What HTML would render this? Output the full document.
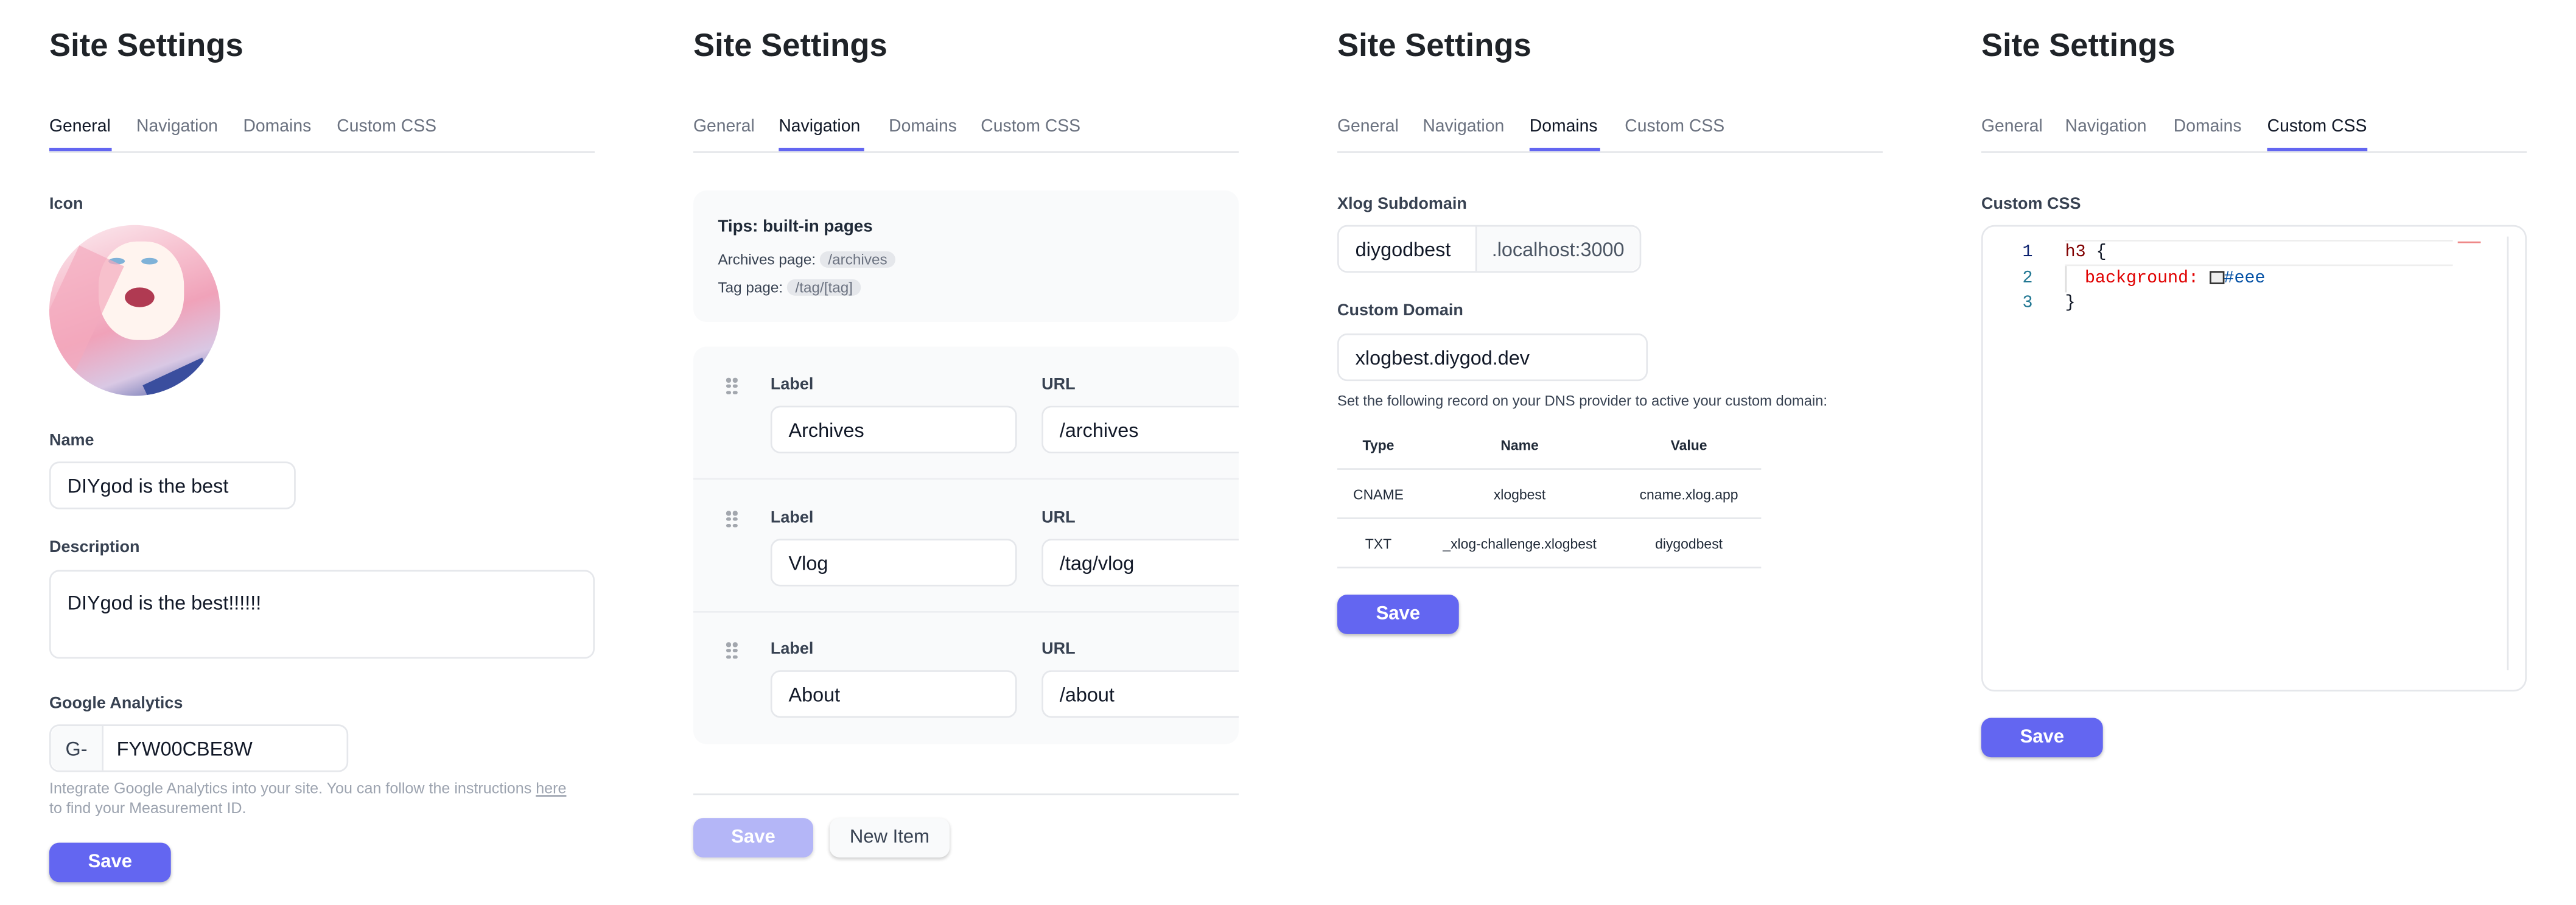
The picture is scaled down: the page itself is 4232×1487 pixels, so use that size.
<!DOCTYPE html>
<html><head><meta charset="utf-8"><style>
*{box-sizing:border-box;margin:0;padding:0}
html,body{width:4232px;height:1486px;overflow:hidden;background:#fff}
#s{position:absolute;left:0;top:0;width:1568px;height:551px;transform:scale(2.699);transform-origin:0 0;font-family:"Liberation Sans",sans-serif;color:#111827}
.a{position:absolute;white-space:nowrap}
.h{font-size:19.5px;font-weight:bold;color:#1f2328;line-height:1}
.tab{font-size:10.5px;color:#6b7280;line-height:1}
.tab.on{color:#111827;font-weight:500}
.ul{position:absolute;height:2px;background:#6366f1}
.bl{position:absolute;height:1px;background:#e5e7eb}
.lb{font-size:10px;font-weight:bold;color:#374151;line-height:1}
.in{position:absolute;border:1px solid #e5e7eb;border-radius:6px;background:#fff;font-size:12px;color:#111827;padding-left:10px;display:flex;align-items:center}
.btn{position:absolute;border-radius:6px;background:#6366f1;color:#fff;font-size:11.5px;font-weight:bold;display:flex;align-items:center;justify-content:center;box-shadow:0 1px 2px rgba(0,0,0,.25)}
.sm{font-size:9.3px;color:#9ca3af;line-height:12px}
.dots{position:absolute;width:7px;height:10px}
.dots i{position:absolute;width:2.6px;height:2.6px;border-radius:50%;background:#a3a7ae}
.mono{font-family:"Liberation Mono",monospace;font-size:10.5px;line-height:1}
</style></head><body><div id="s">

<!-- Panel 1 -->
<div class="a h" style="left:30px;top:18.5px">Site Settings</div>
<div class="a tab on" style="left:30px;top:72px">General</div>
<div class="a tab" style="left:83px;top:72px">Navigation</div>
<div class="a tab" style="left:148px;top:72px">Domains</div>
<div class="a tab" style="left:205px;top:72px">Custom CSS</div>
<div class="bl" style="left:30px;top:91.5px;width:332px"></div>
<div class="ul" style="left:30px;top:90px;width:38px"></div>
<div class="a lb" style="left:30px;top:120px">Icon</div>
<div class="a" style="left:30px;top:137px;width:104px;height:104px;border-radius:50%;overflow:hidden;background:linear-gradient(160deg,#fbeef2 0%,#f7c3d1 30%,#f0a2b9 55%,#d9c8e4 78%,#3a4f9c 100%)">
<div style="position:absolute;left:30px;top:10px;width:52px;height:60px;border-radius:45%;background:#fff4ef"></div>
<div style="position:absolute;left:46px;top:38px;width:18px;height:12px;border-radius:50%;background:#b03a52"></div>
<div style="position:absolute;left:36px;top:20px;width:10px;height:4px;border-radius:50%;background:#7fb2d8"></div>
<div style="position:absolute;left:56px;top:20px;width:10px;height:4px;border-radius:50%;background:#7fb2d8"></div>
<div style="position:absolute;left:60px;top:88px;width:40px;height:24px;background:#3a4e9e;transform:rotate(-25deg)"></div>
<div style="position:absolute;left:0;top:15px;width:30px;height:80px;background:#f4a9bd;transform:rotate(25deg);opacity:.7"></div>
</div>
<div class="a lb" style="left:30px;top:264px">Name</div>
<div class="in" style="left:30px;top:281px;width:150px;height:29px">DIYgod is the best</div>
<div class="a lb" style="left:30px;top:329px">Description</div>
<div class="in" style="left:30px;top:347px;width:332px;height:54px;align-items:flex-start;padding-top:12px">DIYgod is the best!!!!!!</div>
<div class="a lb" style="left:30px;top:424px">Google Analytics</div>
<div class="in" style="left:30px;top:441px;width:182px;height:29px;padding-left:0">
<div style="width:32px;height:100%;background:#f9fafb;border-right:1px solid #e5e7eb;color:#374151;display:flex;align-items:center;justify-content:center;border-radius:6px 0 0 6px">G-</div>
<div style="padding-left:8px">FYW00CBE8W</div></div>
<div class="a sm" style="left:30px;top:474px">Integrate Google Analytics into your site. You can follow the instructions <u>here</u><br>to find your Measurement ID.</div>
<div class="btn" style="left:30px;top:513px;width:74px;height:24px">Save</div>

<!-- Panel 2 -->
<div class="a h" style="left:422px;top:18.5px">Site Settings</div>
<div class="a tab" style="left:422px;top:72px">General</div>
<div class="a tab on" style="left:474px;top:72px">Navigation</div>
<div class="a tab" style="left:541px;top:72px">Domains</div>
<div class="a tab" style="left:597px;top:72px">Custom CSS</div>
<div class="bl" style="left:422px;top:91.5px;width:332px"></div>
<div class="ul" style="left:474px;top:90px;width:52px"></div>
<div class="a" style="left:422px;top:116px;width:332px;height:80px;background:#f9fafb;border-radius:8px"></div>
<div class="a" style="left:437px;top:133px;font-size:10.3px;font-weight:bold;color:#1f2937">Tips: built-in pages</div>
<div class="a" style="left:437px;top:153px;font-size:9px;color:#374151">Archives page: <span style="background:#e5e7eb;color:#6b7280;border-radius:6px;padding:0 5px">/archives</span></div>
<div class="a" style="left:437px;top:170px;font-size:9px;color:#374151">Tag page: <span style="background:#e5e7eb;color:#6b7280;border-radius:6px;padding:0 5px">/tag/[tag]</span></div>
<div class="a" style="left:422px;top:211px;width:332px;height:242px;background:#f9fafb;border-radius:8px;overflow:hidden">
<div class="bl" style="left:0;top:80px;width:332px;background:#eceef1"></div>
<div class="bl" style="left:0;top:161px;width:332px;background:#eceef1"></div>
</div>
<div class="dots" style="left:442px;top:230px"><i style="left:0;top:0"></i><i style="left:4.2px;top:0"></i><i style="left:0;top:3.8px"></i><i style="left:4.2px;top:3.8px"></i><i style="left:0;top:7.6px"></i><i style="left:4.2px;top:7.6px"></i></div>
<div class="a lb" style="left:469px;top:230px">Label</div><div class="a lb" style="left:634px;top:230px">URL</div>
<div class="in" style="left:469px;top:247px;width:150px;height:29px">Archives</div>
<div class="in" style="left:634px;top:247px;width:130px;height:29px;border-right:none;border-radius:6px 0 0 6px">/archives</div>
<div class="dots" style="left:442px;top:311px"><i style="left:0;top:0"></i><i style="left:4.2px;top:0"></i><i style="left:0;top:3.8px"></i><i style="left:4.2px;top:3.8px"></i><i style="left:0;top:7.6px"></i><i style="left:4.2px;top:7.6px"></i></div>
<div class="a lb" style="left:469px;top:311px">Label</div><div class="a lb" style="left:634px;top:311px">URL</div>
<div class="in" style="left:469px;top:328px;width:150px;height:29px">Vlog</div>
<div class="in" style="left:634px;top:328px;width:130px;height:29px;border-right:none;border-radius:6px 0 0 6px">/tag/vlog</div>
<div class="dots" style="left:442px;top:391px"><i style="left:0;top:0"></i><i style="left:4.2px;top:0"></i><i style="left:0;top:3.8px"></i><i style="left:4.2px;top:3.8px"></i><i style="left:0;top:7.6px"></i><i style="left:4.2px;top:7.6px"></i></div>
<div class="a lb" style="left:469px;top:391px">Label</div><div class="a lb" style="left:634px;top:391px">URL</div>
<div class="in" style="left:469px;top:408px;width:150px;height:29px">About</div>
<div class="in" style="left:634px;top:408px;width:130px;height:29px;border-right:none;border-radius:6px 0 0 6px">/about</div>
<div class="a" style="left:754px;top:200px;width:60px;height:300px;background:#fff"></div>
<div class="bl" style="left:422px;top:483px;width:332px"></div>
<div class="btn" style="left:422px;top:498px;width:73px;height:24px;background:#b4b6f7;box-shadow:0 1px 2px rgba(0,0,0,.15)">Save</div>
<div class="btn" style="left:505px;top:498px;width:73px;height:24px;background:#f9fafb;color:#374151;font-weight:500;box-shadow:0 1px 2px rgba(0,0,0,.2)">New Item</div>

<!-- Panel 3 -->
<div class="a h" style="left:814px;top:18.5px">Site Settings</div>
<div class="a tab" style="left:814px;top:72px">General</div>
<div class="a tab" style="left:866px;top:72px">Navigation</div>
<div class="a tab on" style="left:931px;top:72px">Domains</div>
<div class="a tab" style="left:989px;top:72px">Custom CSS</div>
<div class="bl" style="left:814px;top:91.5px;width:332px"></div>
<div class="ul" style="left:931px;top:90px;width:43px"></div>
<div class="a lb" style="left:814px;top:120px">Xlog Subdomain</div>
<div class="in" style="left:814px;top:137px;width:185px;height:29px;padding-left:0">
<div style="width:83px;padding-left:10px">diygodbest</div>
<div style="flex:1;height:100%;background:#f9fafb;border-left:1px solid #e5e7eb;color:#4b5563;display:flex;align-items:center;padding-left:9px;border-radius:0 6px 6px 0">.localhost:3000</div></div>
<div class="a lb" style="left:814px;top:185px">Custom Domain</div>
<div class="in" style="left:814px;top:203px;width:189px;height:29px">xlogbest.diygod.dev</div>
<div class="a" style="left:814px;top:239px;font-size:8.8px;color:#374151">Set the following record on your DNS provider to active your custom domain:</div>
<div class="a" style="left:814px;top:257px;width:258px;font-size:8.5px;color:#1f2937">
<div style="height:29px;border-bottom:1px solid #e5e7eb;position:relative;font-weight:bold"><span class="a" style="left:25px;top:9px;transform:translateX(-50%)">Type</span><span class="a" style="left:111px;top:9px;transform:translateX(-50%)">Name</span><span class="a" style="left:214px;top:9px;transform:translateX(-50%)">Value</span></div>
<div style="height:30px;border-bottom:1px solid #e5e7eb;position:relative"><span class="a" style="left:25px;top:10px;transform:translateX(-50%)">CNAME</span><span class="a" style="left:111px;top:10px;transform:translateX(-50%)">xlogbest</span><span class="a" style="left:214px;top:10px;transform:translateX(-50%)">cname.xlog.app</span></div>
<div style="height:30px;border-bottom:1px solid #e5e7eb;position:relative"><span class="a" style="left:25px;top:10px;transform:translateX(-50%)">TXT</span><span class="a" style="left:111px;top:10px;transform:translateX(-50%)">_xlog-challenge.xlogbest</span><span class="a" style="left:214px;top:10px;transform:translateX(-50%)">diygodbest</span></div>
</div>
<div class="btn" style="left:814px;top:362px;width:74px;height:24px">Save</div>

<!-- Panel 4 -->
<div class="a h" style="left:1206px;top:18.5px">Site Settings</div>
<div class="a tab" style="left:1206px;top:72px">General</div>
<div class="a tab" style="left:1257px;top:72px">Navigation</div>
<div class="a tab" style="left:1323px;top:72px">Domains</div>
<div class="a tab on" style="left:1380px;top:72px">Custom CSS</div>
<div class="bl" style="left:1206px;top:91.5px;width:332px"></div>
<div class="ul" style="left:1380px;top:90px;width:61px"></div>
<div class="a lb" style="left:1206px;top:120px">Custom CSS</div>
<div class="a" style="left:1206px;top:137px;width:332px;height:284px;border:1px solid #e5e7eb;border-radius:8px"></div>
<div class="a" style="left:1526px;top:144px;width:1px;height:264px;background:#e5e7eb"></div>
<div class="a" style="left:1257px;top:146px;width:236px;height:16px;border-top:1px solid #eee;border-bottom:1px solid #eee"></div>
<div class="a" style="left:1257px;top:162px;width:1px;height:16px;background:#ddd"></div>
<div class="a mono" style="left:1231px;top:149px;color:#0b216f">1</div>
<div class="a mono" style="left:1231px;top:165px;color:#237893">2</div>
<div class="a mono" style="left:1231px;top:180px;color:#237893">3</div>
<div class="a mono" style="left:1257px;top:149px"><span style="color:#800000">h3</span> {</div>
<div class="a mono" style="left:1269px;top:165px"><span style="color:#e00000">background:</span> <span style="display:inline-block;width:9px;height:8px;border:1px solid #333;background:#eee;vertical-align:-1px"></span><span style="color:#0451a5">#eee</span></div>
<div class="a mono" style="left:1257px;top:180px">}</div>
<div class="a" style="left:1496px;top:147px;width:14px;height:1px;background:#e88"></div>
<div class="btn" style="left:1206px;top:437px;width:74px;height:24px">Save</div>

</div></body></html>
